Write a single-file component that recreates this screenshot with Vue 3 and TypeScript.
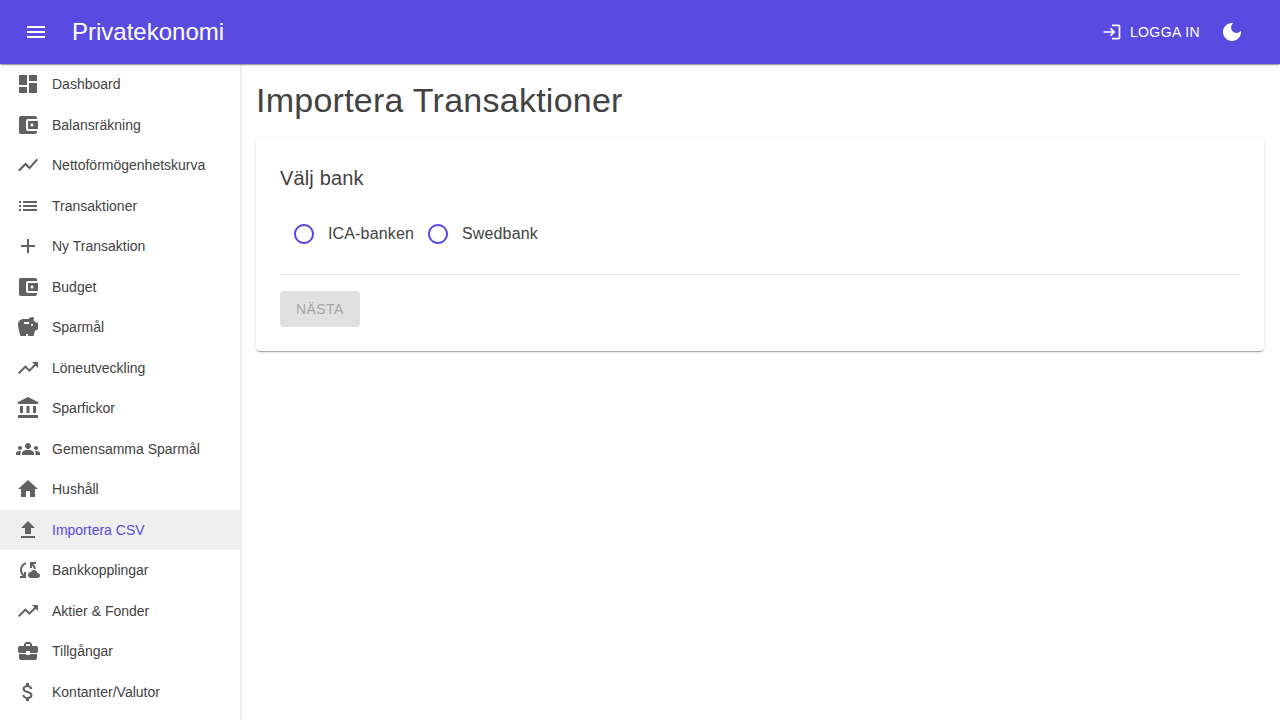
<script setup lang="ts">
import { ref } from 'vue'

interface NavItem {
  label: string
  icon: string
}

const wallet =
  'M21 18v1c0 1.1-.9 2-2 2H5c-1.11 0-2-.9-2-2V5c0-1.1.89-2 2-2h14c1.1 0 2 .9 2 2v1h-9c-1.11 0-2 .9-2 2v8c0 1.1.89 2 2 2h9zm-9-2h10V8H12v8zm4-2.5c-.83 0-1.5-.67-1.5-1.5s.67-1.5 1.5-1.5 1.5.67 1.5 1.5-.67 1.5-1.5 1.5z'
const trendingUp = 'M16 6l2.29 2.29-4.88 4.88-4-4L2 16.59 3.41 18l6-6 4 4 6.3-6.29L22 12V6z'

const navItems: NavItem[] = [
  { label: 'Dashboard', icon: 'M3 13h8V3H3v10zm0 8h8v-6H3v6zm10 0h8V11h-8v10zm0-18v6h8V3h-8z' },
  { label: 'Balansräkning', icon: wallet },
  { label: 'Nettoförmögenhetskurva', icon: 'M3.5 18.49l6-6.01 4 4L22 6.92l-1.41-1.41-7.09 7.97-4-4L2 16.99z' },
  { label: 'Transaktioner', icon: 'M3 13h2v-2H3v2zm0 4h2v-2H3v2zm0-8h2V7H3v2zm4 4h14v-2H7v2zm0 4h14v-2H7v2zM7 7v2h14V7H7z' },
  { label: 'Ny Transaktion', icon: 'M19 13h-6v6h-2v-6H5v-2h6V5h2v6h6v2z' },
  { label: 'Budget', icon: wallet },
  {
    label: 'Sparmål',
    icon: 'M19.83 7.5l-2.27-2.27c.07-.42.18-.81.32-1.15C17.96 3.9 18 3.71 18 3.5 18 2.67 17.33 2 16.5 2c-1.64 0-3.09.79-4 2h-5C4.46 4 2 6.46 2 9.5S4.5 21 4.5 21H10v-2h2v2h5.5l1.68-5.59 2.82-.94V7.5h-2.17zM13 9H8V7h5v2zm3 2c-.55 0-1-.45-1-1s.45-1 1-1 1 .45 1 1-.45 1-1 1z',
  },
  { label: 'Löneutveckling', icon: trendingUp },
  { label: 'Sparfickor', icon: 'M4 10h3v7H4zM10.5 10h3v7h-3zM2 19h20v3H2zM17 10h3v7h-3zM12 1L2 6v2h20V6z' },
  {
    label: 'Gemensamma Sparmål',
    icon: 'M12 12.75c1.63 0 3.07.39 4.24.9 1.08.48 1.76 1.56 1.76 2.73V18H6v-1.61c0-1.18.68-2.26 1.76-2.73 1.17-.52 2.61-.91 4.24-.91zM4 13c1.1 0 2-.9 2-2s-.9-2-2-2-2 .9-2 2 .9 2 2 2zm1.13 1.1C4.76 14.04 4.39 14 4 14c-.99 0-1.93.21-2.78.58C.48 14.9 0 15.62 0 16.43V18h4.5v-1.61c0-.83.23-1.61.63-2.29zM20 13c1.1 0 2-.9 2-2s-.9-2-2-2-2 .9-2 2 .9 2 2 2zm4 3.43c0-.81-.48-1.53-1.22-1.85-.85-.37-1.79-.58-2.78-.58-.39 0-.76.04-1.13.1.4.68.63 1.46.63 2.29V18H24v-1.57zM12 6c1.66 0 3 1.34 3 3s-1.34 3-3 3-3-1.34-3-3 1.34-3 3-3z',
  },
  { label: 'Hushåll', icon: 'M10 20v-6h4v6h5v-8h3L12 3 2 12h3v8z' },
  { label: 'Importera CSV', icon: 'M5 20h14v-2H5v2zm0-10h4v6h6v-6h4l-7-7-7 7z' },
  {
    label: 'Bankkopplingar',
    icon: 'M21.5 14.98c-.02 0-.03 0-.05.01C21.2 13.3 19.76 12 18 12c-1.4 0-2.6.83-3.16 2.02C13.26 14.1 12 15.4 12 17c0 1.66 1.34 3 3 3l6.5-.02c1.38 0 2.5-1.12 2.5-2.5s-1.12-2.5-2.5-2.5zM10 4.26v2.09C7.67 7.18 6 9.39 6 12c0 1.77.78 3.34 2 4.44V14h2v6H4v-2h2.73C5.06 16.54 4 14.4 4 12c0-3.73 2.55-6.85 6-7.74zM20 6h-2.73c1.43 1.26 2.41 3.01 2.66 5h-2.02c-.23-1.36-.93-2.55-1.91-3.44V10h-2V4h6v2z',
  },
  { label: 'Aktier & Fonder', icon: trendingUp },
  {
    label: 'Tillgångar',
    icon: 'M10 16v-1H3.01L3 19c0 1.11.89 2 2 2h14c1.11 0 2-.89 2-2v-4h-7v1h-4zm10-9h-4.01V5l-2-2h-4l-2 2v2H4c-1.1 0-2 .9-2 2v3c0 1.11.89 2 2 2h6v-2h4v2h6c1.1 0 2-.9 2-2V9c0-1.1-.9-2-2-2zm-6 0h-4V5h4v2z',
  },
  {
    label: 'Kontanter/Valutor',
    icon: 'M11.8 10.9c-2.27-.59-3-1.2-3-2.15 0-1.09 1.01-1.85 2.7-1.85 1.78 0 2.44.85 2.5 2.1h2.21c-.07-1.72-1.12-3.3-3.21-3.81V3h-3v2.16c-1.94.42-3.5 1.68-3.5 3.61 0 2.31 1.91 3.46 4.7 4.13 2.5.6 3 1.48 3 2.41 0 .69-.49 1.79-2.7 1.79-2.06 0-2.87-.92-2.98-2.1h-2.2c.12 2.19 1.76 3.42 3.68 3.83V21h3v-2.15c1.95-.37 3.5-1.5 3.5-3.55 0-2.84-2.43-3.81-4.7-4.4z',
  },
]

const active = ref('Importera CSV')
const banks = ['ICA-banken', 'Swedbank']
const selectedBank = ref<string | null>(null)
</script>

<template>
  <div class="layout">
    <header class="appbar">
      <button class="icon-button" type="button">
        <svg class="icon" viewBox="0 0 24 24"><path d="M3 18h18v-2H3v2zm0-5h18v-2H3v2zm0-7v2h18V6H3z" /></svg>
      </button>
      <div class="brand">Privatekonomi</div>
      <button class="login" type="button">
        <svg class="icon small" viewBox="0 0 24 24">
          <path d="M11 7L9.6 8.4l2.6 2.6H2v2h10.2l-2.6 2.6L11 17l5-5-5-5zm9 12h-8v2h8c1.1 0 2-.9 2-2V5c0-1.1-.9-2-2-2h-8v2h8v14z" />
        </svg>
        <span>LOGGA IN</span>
      </button>
      <button class="icon-button" type="button">
        <svg class="icon" viewBox="0 0 24 24">
          <path d="M12 3c-4.97 0-9 4.03-9 9s4.03 9 9 9 9-4.03 9-9c0-.46-.04-.92-.1-1.36-.98 1.37-2.58 2.26-4.4 2.26-2.98 0-5.4-2.42-5.4-5.4 0-1.81.89-3.42 2.26-4.4C12.92 3.04 12.46 3 12 3z" />
        </svg>
      </button>
    </header>
    <div class="body">
      <nav class="drawer">
        <a
          v-for="item in navItems"
          :key="item.label"
          class="nav-link"
          :class="{ active: item.label === active }"
          @click="active = item.label"
        >
          <svg class="icon" viewBox="0 0 24 24"><path :d="item.icon" /></svg>
          <span class="nav-text">{{ item.label }}</span>
        </a>
      </nav>
      <main class="content">
        <h1 class="title">Importera Transaktioner</h1>
        <section class="card">
          <h2 class="subtitle">Välj bank</h2>
          <div class="radios">
            <label v-for="bank in banks" :key="bank" class="radio" @click="selectedBank = bank">
              <span class="radio-button">
                <svg class="icon" viewBox="0 0 24 24">
                  <path d="M12 2C6.48 2 2 6.48 2 12s4.48 10 10 10 10-4.48 10-10S17.52 2 12 2zm0 18c-4.42 0-8-3.58-8-8s3.58-8 8-8 8 3.58 8 8-3.58 8-8 8z" />
                  <circle v-if="selectedBank === bank" cx="12" cy="12" r="5" />
                </svg>
              </span>
              <span>{{ bank }}</span>
            </label>
          </div>
          <hr class="divider" />
          <button class="next" type="button" :disabled="!selectedBank">NÄSTA</button>
        </section>
      </main>
    </div>
  </div>
</template>

<style>
body {
  margin: 0;
  background: #fff;
}
</style>

<style scoped>
.layout {
  display: flex;
  flex-direction: column;
  height: 100vh;
  overflow: hidden;
  color: #424242;
  font-family: 'Liberation Sans', Arial, sans-serif;
  font-size: 14px;
}
.layout * {
  box-sizing: border-box;
}
button {
  border: 0;
  margin: 0;
  padding: 0;
  background: transparent;
  color: inherit;
  font: inherit;
}
.icon {
  display: block;
  flex: none;
  width: 24px;
  height: 24px;
  fill: currentColor;
}
.icon.small {
  width: 20px;
  height: 20px;
}
.appbar {
  position: relative;
  z-index: 2;
  flex: none;
  display: flex;
  align-items: center;
  height: 64px;
  padding: 0 24px 0 12px;
  background: #594ae2;
  color: #fff;
  box-shadow: 0 2px 1px -1px rgba(0, 0, 0, 0.2), 0 1px 1px 0 rgba(0, 0, 0, 0.14), 0 1px 3px 0 rgba(0, 0, 0, 0.12);
}
.icon-button {
  padding: 12px;
}
.brand {
  flex: 1;
  margin-left: 12px;
  font-size: 24px;
  line-height: 32px;
}
.login {
  display: flex;
  align-items: center;
  gap: 8px;
  padding: 6px 8px;
  font-size: 14px;
  line-height: 24.5px;
  letter-spacing: 0.02857em;
}
.body {
  flex: 1;
  min-height: 0;
  display: flex;
}
.drawer {
  flex: none;
  width: 240px;
  background: #fff;
  box-shadow: 0 3px 1px -2px rgba(0, 0, 0, 0.2), 0 2px 2px 0 rgba(0, 0, 0, 0.14), 0 1px 5px 0 rgba(0, 0, 0, 0.12);
}
.nav-link {
  display: flex;
  align-items: center;
  padding: 8px 16px;
  line-height: 24.5px;
  cursor: pointer;
}
.nav-link .icon {
  color: #616161;
}
.nav-text {
  margin-left: 12px;
  white-space: nowrap;
}
.nav-link.active {
  background: #efefef;
  color: #594ae2;
}
.content {
  flex: 1;
  padding: 16px;
}
.title {
  margin: 0 0 18px;
  font-size: 34px;
  font-weight: 400;
  line-height: 40px;
  letter-spacing: 0.00735em;
}
.card {
  padding: 24px;
  border-radius: 4px;
  background: #fff;
  box-shadow: 0 2px 1px -1px rgba(0, 0, 0, 0.2), 0 1px 1px 0 rgba(0, 0, 0, 0.14), 0 1px 3px 0 rgba(0, 0, 0, 0.12);
}
.subtitle {
  margin: 0 0 16px;
  font-size: 20px;
  font-weight: 400;
  line-height: 32px;
  letter-spacing: 0.0075em;
}
.radios {
  display: flex;
}
.radio {
  display: flex;
  align-items: center;
  font-size: 16px;
  line-height: 24px;
  letter-spacing: 0.00938em;
}
.radio-button {
  padding: 12px;
  color: #594ae2;
}
.divider {
  height: 1px;
  margin: 16px 0;
  border: 0;
  background: #e0e0e0;
}
.next {
  display: block;
  height: 36px;
  padding: 0 16px;
  border-radius: 4px;
  background: #594ae2;
  color: #fff;
  font-size: 14px;
  line-height: 24.5px;
  letter-spacing: 0.02857em;
}
.next:disabled {
  background: #e0e0e0;
  color: #a6a6a6;
}
</style>
